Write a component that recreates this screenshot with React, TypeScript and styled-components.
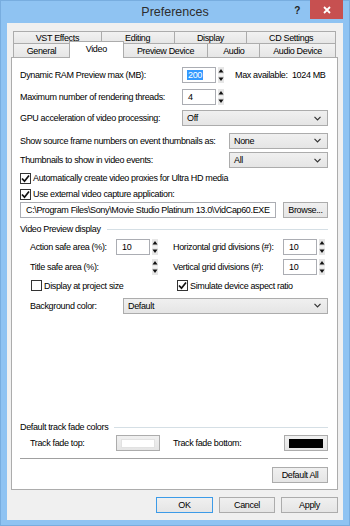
import React from "react";
import styled, { createGlobalStyle, css } from "styled-components";

const GlobalStyle = createGlobalStyle`
  html, body {
    margin: 0;
    padding: 0;
  }
  body {
    width: 350px;
    height: 526px;
    overflow: hidden;
    font-family: "Liberation Sans", Arial, sans-serif;
    font-size: 9px;
    letter-spacing: -0.35px;
    color: #000;
  }
`;

const Window = styled.div`
  width: 350px;
  height: 526px;
  box-sizing: border-box;
  background: #8fc3f2;
  border: 1px solid #78addf;
  display: flex;
  flex-direction: column;
`;

const TitleBar = styled.div`
  height: 22px;
  display: grid;
  grid-template-columns: 1fr auto 1fr;
  align-items: start;
`;

const Title = styled.div`
  grid-column: 2;
  font-size: 12.5px;
  letter-spacing: 0;
  line-height: 23px;
  color: #2d2d2d;
`;

const TitleControls = styled.div`
  grid-column: 3;
  justify-self: end;
  display: flex;
  align-items: flex-start;
`;

const HelpGlyph = styled.span`
  font-weight: bold;
  font-size: 10px;
  line-height: 19px;
  color: #222;
  margin-right: 10px;
`;

const CloseButton = styled.div`
  width: 33px;
  height: 19px;
  margin-top: -1px;
  margin-right: 6px;
  background: #c75050;
  display: flex;
  align-items: center;
  justify-content: center;
`;

const Client = styled.div`
  flex: 1;
  margin: 0 6px 5px 6px;
  background: #f0f0f0;
  padding: 8px 5px 7px 4px;
  display: flex;
  flex-direction: column;
  min-height: 0;
`;

const TabRow = styled.div<{ $h: number }>`
  display: flex;
  height: ${(p) => p.$h}px;
  padding: 0 2px 0 3px;
`;

const Tab = styled.div<{ $w: number; $active?: boolean }>`
  width: ${(p) => p.$w}px;
  box-sizing: border-box;
  margin-left: -1px;
  border: 1px solid #acacac;
  border-bottom: none;
  background: linear-gradient(#f2f2f2, #e6e6e6);
  display: flex;
  align-items: center;
  justify-content: center;
  white-space: nowrap;
  ${(p) =>
    p.$active &&
    css`
      background: #fff;
      margin-top: -2px;
      height: calc(100% + 3px);
      position: relative;
      z-index: 1;
      padding-bottom: 3px;
    `}
`;

const Panel = styled.div`
  flex: 1;
  background: #fff;
  border: 1px solid #acacac;
  padding: 8px 9px 6px 8px;
  display: flex;
  flex-direction: column;
`;

const Row = styled.div<{ $top?: number; $h: number; $indent?: number }>`
  display: flex;
  align-items: center;
  height: ${(p) => p.$h}px;
  margin-top: ${(p) => p.$top ?? 0}px;
  padding-left: ${(p) => p.$indent ?? 0}px;
  white-space: nowrap;
`;

const Label = styled.span<{ $w?: number; $gap?: number }>`
  flex: none;
  width: ${(p) => (p.$w ? `${p.$w}px` : "auto")};
  margin-left: ${(p) => p.$gap ?? 0}px;
`;

const Note = styled.span`
  margin-left: 11px;
`;

const Field = styled.div<{ $w?: number; $hidden?: boolean }>`
  box-sizing: border-box;
  height: 16px;
  width: ${(p) => (p.$w ? `${p.$w}px` : "auto")};
  flex: ${(p) => (p.$w ? "none" : "1")};
  border: 1px solid #abadb3;
  background: #fff;
  display: flex;
  align-items: center;
  padding-left: 5px;
  overflow: hidden;
  ${(p) =>
    p.$hidden &&
    css`
      visibility: hidden;
    `}
`;

const Selected = styled.span`
  background: #3399ff;
  color: #fff;
  padding: 0 1px;
  margin-left: -1px;
`;

const SpinWrap = styled.div`
  display: flex;
  align-items: center;
  gap: 2px;
  flex: none;
`;

const Combo = styled.div`
  box-sizing: border-box;
  height: 16px;
  flex: 1;
  border: 1px solid #acacac;
  background: linear-gradient(#f0f0f0, #e5e5e5);
  display: flex;
  align-items: center;
  justify-content: space-between;
  padding: 0 6px 0 4px;
`;

const CheckItem = styled.label<{ $w?: number }>`
  display: flex;
  align-items: center;
  gap: 2px;
  flex: none;
  width: ${(p) => (p.$w ? `${p.$w}px` : "auto")};
  white-space: nowrap;
`;

const Box = styled.span`
  box-sizing: border-box;
  width: 11px;
  height: 11px;
  border: 1px solid #333;
  background: #fff;
  display: flex;
  align-items: center;
  justify-content: center;
  flex: none;
`;

const Button = styled.div<{ $w: number; $default?: boolean }>`
  box-sizing: border-box;
  width: ${(p) => p.$w}px;
  height: 16px;
  flex: none;
  border: 1px solid ${(p) => (p.$default ? "#3c9be8" : "#acacac")};
  background: linear-gradient(#f0f0f0, #e5e5e5);
  display: flex;
  align-items: center;
  justify-content: center;
`;

const BrowseButton = styled(Button)`
  margin-left: 7px;
`;

const Swatch = styled.span<{ $color: string }>`
  width: 34px;
  height: 9px;
  background: ${(p) => p.$color};
  border: 1px solid ${(p) => (p.$color === "#fff" ? "#e2e2e2" : "#000")};
  box-sizing: border-box;
`;

const GroupHead = styled.div<{ $top?: number }>`
  display: flex;
  align-items: center;
  height: 10px;
  margin-top: ${(p) => p.$top ?? 0}px;
  white-space: nowrap;
`;

const GroupLine = styled.div`
  flex: 1;
  height: 1px;
  background: #d5dfe5;
  margin-left: 6px;
`;

const Spacer = styled.div`
  flex: 1;
`;

const Separator = styled.div`
  height: 1px;
  background: #a0a0a0;
  border-bottom: 1px solid #fff;
  margin-top: 7px;
`;

const RightRow = styled.div<{ $top: number }>`
  display: flex;
  justify-content: flex-end;
  gap: 6px;
  margin-top: ${(p) => p.$top}px;
`;

const Arrows = () => (
  <svg width="6" height="16" viewBox="0 0 6 16">
    <rect x="0" y="0" width="6" height="7.5" fill="#e6e6e6" />
    <rect x="0" y="8.5" width="6" height="7.5" fill="#e6e6e6" />
    <polygon points="3,2 5.5,5.5 0.5,5.5" fill="#111" />
    <polygon points="0.5,10.5 5.5,10.5 3,14" fill="#111" />
  </svg>
);

const Chevron = () => (
  <svg width="7" height="5" viewBox="0 0 7 5">
    <polyline points="0.5,0.8 3.5,3.8 6.5,0.8" fill="none" stroke="#333" strokeWidth="1.2" />
  </svg>
);

const Tick = () => (
  <svg width="9" height="9" viewBox="0 0 9 9">
    <path d="M1 4.5 L3.5 7.2 L8 1.5" fill="none" stroke="#111" strokeWidth="1.7" />
  </svg>
);

const Spin: React.FC<{ value?: React.ReactNode; hidden?: boolean }> = ({ value, hidden }) => (
  <SpinWrap>
    <Field $w={34} $hidden={hidden}>
      {value}
    </Field>
    <Arrows />
  </SpinWrap>
);

const Check: React.FC<{ on?: boolean }> = ({ on }) => <Box>{on && <Tick />}</Box>;

const topTabs = [
  { t: "VST Effects", w: 89 },
  { t: "Editing", w: 74 },
  { t: "Display", w: 74 },
  { t: "CD Settings", w: 90 },
];

const bottomTabs = [
  { t: "General", w: 57 },
  { t: "Video", w: 55, active: true },
  { t: "Preview Device", w: 86 },
  { t: "Audio", w: 53 },
  { t: "Audio Device", w: 77 },
];

export default function App() {
  return (
    <>
      <GlobalStyle />
      <Window>
        <TitleBar>
          <Title>Preferences</Title>
          <TitleControls>
            <HelpGlyph>?</HelpGlyph>
            <CloseButton>
              <svg width="8" height="8" viewBox="0 0 8 8">
                <path d="M1 1 L7 7 M7 1 L1 7" stroke="#fff" strokeWidth="1.8" />
              </svg>
            </CloseButton>
          </TitleControls>
        </TitleBar>
        <Client>
          <TabRow $h={12}>
            {topTabs.map((tab) => (
              <Tab key={tab.t} $w={tab.w}>
                {tab.t}
              </Tab>
            ))}
          </TabRow>
          <TabRow $h={14}>
            {bottomTabs.map((tab) => (
              <Tab key={tab.t} $w={tab.w} $active={tab.active}>
                {tab.t}
              </Tab>
            ))}
          </TabRow>
          <Panel>
            <Row $h={17}>
              <Label $w={162}>Dynamic RAM Preview max (MB):</Label>
              <Spin value={<Selected>200</Selected>} />
              <Note>Max available:&nbsp; 1024 MB</Note>
            </Row>
            <Row $h={17} $top={5}>
              <Label $w={162}>Maximum number of rendering threads:</Label>
              <Spin value="4" />
            </Row>
            <Row $h={16} $top={5}>
              <Label $w={162}>GPU acceleration of video processing:</Label>
              <Combo>
                Off
                <Chevron />
              </Combo>
            </Row>
            <Row $h={17} $top={6}>
              <Label $w={209}>Show source frame numbers on event thumbnails as:</Label>
              <Combo>
                None
                <Chevron />
              </Combo>
            </Row>
            <Row $h={16} $top={3}>
              <Label $w={209}>Thumbnails to show in video events:</Label>
              <Combo>
                All
                <Chevron />
              </Combo>
            </Row>
            <Row $h={12} $top={4}>
              <CheckItem>
                <Check on />
                Automatically create video proxies for Ultra HD media
              </CheckItem>
            </Row>
            <Row $h={12} $top={4}>
              <CheckItem>
                <Check on />
                Use external video capture application:
              </CheckItem>
            </Row>
            <Row $h={17} $top={1}>
              <Field>C:\Program Files\Sony\Movie Studio Platinum 13.0\VidCap60.EXE</Field>
              <BrowseButton $w={45}>Browse...</BrowseButton>
            </Row>
            <GroupHead $top={6}>
              Video Preview display
              <GroupLine />
            </GroupHead>
            <Row $h={17} $top={4} $indent={10}>
              <Label $w={86}>Action safe area (%):</Label>
              <Spin value="10" />
              <Label $w={110} $gap={15}>
                Horizontal grid divisions (#):
              </Label>
              <Spin value="10" />
            </Row>
            <Row $h={17} $top={3} $indent={10}>
              <Label $w={86}>Title safe area (%):</Label>
              <Spin hidden />
              <Label $w={110} $gap={15}>
                Vertical grid divisions (#):
              </Label>
              <Spin value="10" />
            </Row>
            <Row $h={15} $top={3} $indent={11}>
              <CheckItem $w={146}>
                <Check />
                Display at project size
              </CheckItem>
              <CheckItem>
                <Check on />
                Simulate device aspect ratio
              </CheckItem>
            </Row>
            <Row $h={17} $top={4} $indent={10}>
              <Label $w={93}>Background color:</Label>
              <Combo>
                Default
                <Chevron />
              </Combo>
            </Row>
            <Spacer />
            <GroupHead>
              Default track fade colors
              <GroupLine />
            </GroupHead>
            <Row $h={16} $top={3} $indent={10}>
              <Label $w={86}>Track fade top:</Label>
              <Button $w={44}>
                <Swatch $color="#fff" />
              </Button>
              <Label $w={111} $gap={13}>
                Track fade bottom:
              </Label>
              <Button $w={44}>
                <Swatch $color="#000" />
              </Button>
            </Row>
            <Separator />
            <RightRow $top={7}>
              <Button $w={56}>Default All</Button>
            </RightRow>
          </Panel>
          <RightRow $top={7}>
            <Button $w={57} $default>
              OK
            </Button>
            <Button $w={56}>Cancel</Button>
            <Button $w={57}>Apply</Button>
          </RightRow>
        </Client>
      </Window>
    </>
  );
}
